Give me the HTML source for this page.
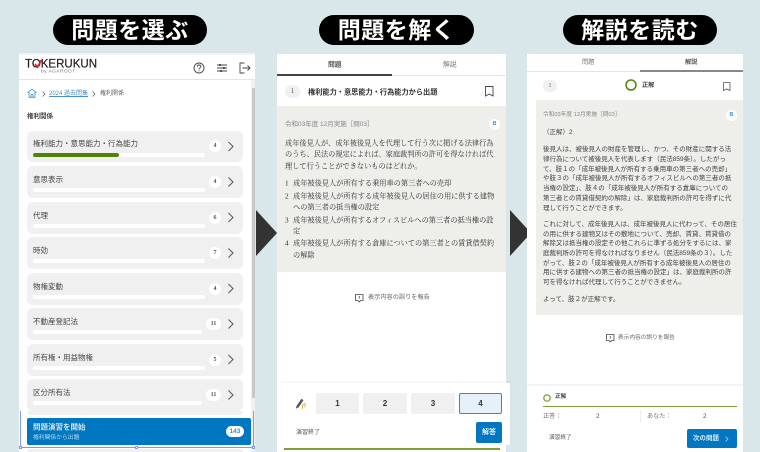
<!DOCTYPE html>
<html lang="ja"><head><meta charset="utf-8">
<style>
*{box-sizing:border-box}
html,body{margin:0;padding:0}
html{background:#d9e6ea}
body{width:760px;height:452px;overflow:hidden;background:#d9e6ea;position:relative;font-family:"Liberation Sans","Noto Sans CJK JP",sans-serif;color:#444;filter:blur(.3px)}
.a{position:absolute;white-space:nowrap}
.t{position:absolute;white-space:nowrap;line-height:1;transform:translateY(-50%)}
.pill{position:absolute;top:15px;height:30px;background:#000;border-radius:15px;color:#fff;font-size:23px;font-weight:700;text-align:center;line-height:30px;letter-spacing:.5px}
.item{position:absolute;left:27px;width:216px;height:32px;background:#f0f0f0;border-radius:6px}
.item .l{position:absolute;left:6px;top:9.500px;font-size:7.500px;line-height:1;color:#444;white-space:nowrap}
.item .b{position:absolute;left:6px;top:21.500px;height:4px;border-radius:2px;background:#fff}
.item .c{position:absolute;top:10px;height:12px;border-radius:6px;background:#fff;font:700 6px/12px "Liberation Serif",serif;text-align:center;color:#555}
.p{font-family:"Liberation Serif","Noto Serif CJK SC",serif;font-size:7.200px;color:#2e2e2e}
.e{font-size:6.500px;color:#444}
.opt{position:absolute;top:393px;height:21px;background:#f0f0f0;border-radius:2px;font:700 8px/21px "Liberation Sans",sans-serif;text-align:center;color:#333}
.badge{position:absolute;width:11px;height:11px;border-radius:50%;background:#fff;color:#3a94dc;font:700 5.500px/11px "Liberation Sans",sans-serif;text-align:center}
.h{position:absolute;width:3px;height:3px;background:#fff;border:1px solid #7c9bea}
svg{position:absolute;overflow:visible}
</style></head><body>

<div class="pill" style="left:53px;width:154px">問題を選ぶ</div>
<div class="pill" style="left:319px;width:155px">問題を解く</div>
<div class="pill" style="left:563px;width:154px">解説を読む</div>

<svg style="left:256px;top:210px" width="21" height="46"><path d="M0 0L21 23L0 46Z" fill="#333"/></svg>
<svg style="left:510px;top:210px" width="21" height="46"><path d="M0 0L21 23L0 46Z" fill="#333"/></svg>

<!-- panel 1 -->
<div class="a" style="left:19px;top:53px;width:236px;height:399px;background:#fff"></div>
<div class="a" style="left:19px;top:53px;width:236px;height:2px;background:#f0f5f6"></div>
<div class="a" style="left:19px;top:79px;width:236px;height:1px;background:#e4e4e4"></div>
<div class="t" style="left:25px;top:64.500px;font-size:11.500px;letter-spacing:0;color:#222;-webkit-text-stroke:.2px #222">TOKERUKUN</div>
<svg style="left:34px;top:59px" width="9" height="10"><path d="M1 5L3.500 8L7.500 1" fill="none" stroke="#d8232a" stroke-width="1.700"/></svg>
<div class="t" style="left:41px;top:73px;font-size:4.800px;letter-spacing:.45px;color:#777">by AGAROOT</div>
<svg style="left:193px;top:62px" width="12" height="12" viewBox="0 0 12 12"><circle cx="6" cy="6" r="5" fill="none" stroke="#444" stroke-width=".9"/><path d="M4.300 4.800C4.300 3.600 5 3 6 3S7.800 3.600 7.800 4.600C7.800 5.800 6 5.900 6 7.400M6 8.400V9.200" fill="none" stroke="#444" stroke-width=".9"/></svg>
<svg style="left:217px;top:63px" width="11" height="10" viewBox="0 0 11 10"><path d="M0 2H10M0 5H10M0 8H10" stroke="#444" stroke-width="1"/><path d="M3 1V3M7 4V6M4 7V9" stroke="#222" stroke-width="1.200"/></svg>
<svg style="left:239px;top:62px" width="12" height="12" viewBox="0 0 12 12"><path d="M5.500 1H1V11H5.500" fill="none" stroke="#444" stroke-width=".9"/><path d="M3.500 6H11M8.500 3.500L11 6L8.500 8.500" fill="none" stroke="#444" stroke-width=".9"/></svg>
<svg style="left:27px;top:88px" width="10" height="10" viewBox="0 0 10 10"><path d="M.5 5L5 1L9.500 5M2 4V9.300H8V4M4 9.300V6.500H6V9.300" fill="none" stroke="#3a8fd0" stroke-width=".8"/></svg>
<svg style="left:42px;top:91px" width="4" height="6"><path d="M.5.500L3 3L.5 5.500" fill="none" stroke="#555" stroke-width=".7"/></svg>
<div class="t" style="left:49px;top:94px;font-size:6px;color:#4a90c8;text-decoration:underline">2024 過去問集</div>
<svg style="left:92px;top:91px" width="4" height="6"><path d="M.5.500L3 3L.5 5.500" fill="none" stroke="#555" stroke-width=".7"/></svg>
<div class="t" style="left:100px;top:94px;font-size:6px;color:#666">権利関係</div>
<div class="t" style="left:27px;top:117px;font-size:6.500px;font-weight:700;color:#444">権利関係</div>

<div class="a" style="left:251px;top:80px;width:4px;height:372px;background:#f0f0f0"></div>
<div class="a" style="left:252px;top:88px;width:3px;height:310px;background:#c8c8c8"></div>

<div class="item" style="top:131px;height:31px"><div class="l" style="top:9.250px">権利能力・意思能力・行為能力</div><div class="b" style="width:172px"></div><div class="b" style="width:86px;background:#4f8506"></div><div class="c" style="left:182px;width:12px;top:9px">4</div></div>
<div class="item" style="top:166px"><div class="l">意思表示</div><div class="b" style="width:172px"></div><div class="c" style="left:182px;width:12px">4</div></div>
<div class="item" style="top:202px"><div class="l">代理</div><div class="b" style="width:172px"></div><div class="c" style="left:182px;width:12px">6</div></div>
<div class="item" style="top:237px"><div class="l">時効</div><div class="b" style="width:172px"></div><div class="c" style="left:182px;width:12px">7</div></div>
<div class="item" style="top:273px"><div class="l">物権変動</div><div class="b" style="width:172px"></div><div class="c" style="left:182px;width:12px">4</div></div>
<div class="item" style="top:308px"><div class="l">不動産登記法</div><div class="b" style="width:169px"></div><div class="c" style="left:179px;width:15px">11</div></div>
<div class="item" style="top:344px"><div class="l">所有権・用益物権</div><div class="b" style="width:172px"></div><div class="c" style="left:182px;width:12px">5</div></div>
<div class="item" style="top:379px"><div class="l">区分所有法</div><div class="b" style="width:169px"></div><div class="c" style="left:179px;width:15px">11</div></div>
<div class="a" style="left:27px;top:411px;width:216px;height:4px;background:#f0f0f0;border-radius:0 0 4px 4px"></div>
<div class="a" style="left:27px;top:449px;width:216px;height:3px;background:#f0f0f0;border-radius:4px 4px 0 0"></div>

<svg style="left:228px;top:0" width="8" height="452"><g fill="none" stroke="#555" stroke-width="1">
<path d="M.5 142L5 146.500L.5 151"/><path d="M.5 177.500L5 182L.5 186.500"/><path d="M.5 213L5 217.500L.5 222"/><path d="M.5 248.500L5 253L.5 257.500"/><path d="M.5 284L5 288.500L.5 293"/><path d="M.5 319.500L5 324L.5 328.500"/><path d="M.5 355L5 359.500L.5 364"/><path d="M.5 390.500L5 395L.5 399.500"/></g></svg>

<div class="a" style="left:20px;top:411px;width:234px;height:37px;border:1px solid #7c9bea;border-top:0"></div>
<div class="h" style="left:19px;top:446px"></div>
<div class="h" style="left:135px;top:446px"></div>
<div class="h" style="left:252px;top:446px"></div>
<div class="a" style="left:27px;top:418px;width:224px;height:27px;background:#0077c0;border-radius:2px"></div>
<div class="t" style="left:33px;top:426.500px;font-size:7.500px;font-weight:700;color:#cfe4f3">問題演習を開始</div>
<div class="t" style="left:33px;top:438.500px;font-size:5.800px;color:#b5d6ec">権利関係から出題</div>
<div class="a" style="left:226px;top:426px;width:18px;height:11px;border-radius:6px;background:#fff;color:#3a8ec8;font:700 6.500px/11px 'Liberation Sans',sans-serif;text-align:center">143</div>

<!-- panel 2 -->
<div class="a" style="left:277px;top:54px;width:229px;height:398px;background:#fff"></div>
<div class="t" style="left:328px;top:65.500px;font-size:6.800px;font-weight:700;color:#555">問題</div>
<div class="t" style="left:443px;top:65.500px;font-size:6.800px;color:#777">解説</div>
<div class="a" style="left:277px;top:75px;width:229px;height:1px;background:#e4e4e4"></div>
<div class="a" style="left:277px;top:74px;width:115px;height:1.500px;background:#444"></div>
<div class="a" style="left:285px;top:85px;width:15px;height:13px;border-radius:7px;background:#f0f0f0;color:#555;font:7px/13px 'Liberation Serif',serif;text-align:center">1</div>
<div class="t" style="left:308px;top:91.500px;font-size:7.200px;font-weight:700;color:#333">権利能力・意思能力・行為能力から出題</div>
<svg style="left:485px;top:86px" width="9" height="11"><path d="M.5.500H8V10L4.250 8L.5 10Z" fill="none" stroke="#444" stroke-width=".9"/></svg>
<div class="a" style="left:277px;top:106px;width:229px;height:166px;background:#eeeeea"></div>
<div class="t" style="left:285px;top:125px;font-size:6.500px;color:#888">令和03年度 12月実施［問03］</div>
<div class="badge" style="left:489px;top:119px">B</div>
<div class="t p" style="left:285px;top:143.500px">成年後見人が、成年被後見人を代理して行う次に掲げる法律行為</div>
<div class="t p" style="left:285px;top:155px">のうち、民法の規定によれば、家庭裁判所の許可を得なければ代</div>
<div class="t p" style="left:285px;top:166.500px">理して行うことができないものはどれか。</div>
<div class="t p" style="left:285px;top:184px">1</div><div class="t p" style="left:293px;top:184px">成年被後見人が所有する乗用車の第三者への売却</div>
<div class="t p" style="left:285px;top:197px">2</div><div class="t p" style="left:293px;top:197px">成年被後見人が所有する成年被後見人の居住の用に供する建物</div>
<div class="t p" style="left:293px;top:208px">への第三者の抵当権の設定</div>
<div class="t p" style="left:285px;top:221px">3</div><div class="t p" style="left:293px;top:221px">成年被後見人が所有するオフィスビルへの第三者の抵当権の設</div>
<div class="t p" style="left:293px;top:232px">定</div>
<div class="t p" style="left:285px;top:244px">4</div><div class="t p" style="left:293px;top:244px">成年被後見人が所有する倉庫についての第三者との賃貸借契約</div>
<div class="t p" style="left:293px;top:256px">の解除</div>
<svg style="left:355px;top:294px" width="9" height="9"><path d="M.5.500H8V6.500H5.500L4.250 8L3 6.500H.5Z" fill="none" stroke="#444" stroke-width=".8"/><path d="M4.250 2V4.500" stroke="#444" stroke-width=".8"/></svg>
<div class="t" style="left:368px;top:298px;font-size:6.200px;color:#666">表示内容の誤りを報告</div>

<div class="a" style="left:281px;top:383px;width:229px;height:62px;background:#fff;box-shadow:0 -1px 2px rgba(0,0,0,.05)"></div>
<svg style="left:295px;top:398px" width="11" height="12" viewBox="0 0 11 12"><path d="M1.500 8L6.500.8L8.500 2.300L3.500 9.500L1 10.500Z" fill="#555"/><path d="M7.500 11V7L10 5.500V9.500" fill="none" stroke="#e8b24a" stroke-width="1"/></svg>
<div class="opt" style="left:316px;width:43px">1</div>
<div class="opt" style="left:363px;width:44px">2</div>
<div class="opt" style="left:411px;width:44px">3</div>
<div class="opt" style="left:459px;width:43px;background:#e6f0f9;border:1px solid #2f8ccb;line-height:19px">4</div>
<div class="t" style="left:296px;top:433px;font-size:6px;color:#555">演習終了</div>
<div class="a" style="left:476px;top:422px;width:26px;height:21px;background:#0077c0;border-radius:2px;color:#e6f2fa;font:700 7px/21px 'Liberation Sans','Noto Sans CJK JP',sans-serif;text-align:center">解答</div>
<div class="a" style="left:284px;top:448px;width:216px;height:1.500px;background:#7ba23a"></div>

<!-- panel 3 -->
<div class="a" style="left:527px;top:54px;width:216px;height:398px;background:#fff"></div>
<div class="t" style="left:582px;top:62.500px;font-size:6.200px;color:#777">問題</div>
<div class="t" style="left:685px;top:62.500px;font-size:6.200px;font-weight:700;color:#555">解説</div>
<div class="a" style="left:527px;top:71px;width:216px;height:1px;background:#e4e4e4"></div>
<div class="a" style="left:640px;top:70px;width:103px;height:1.500px;background:#888"></div>
<div class="a" style="left:543px;top:80px;width:14px;height:12px;border-radius:6px;background:#f0f0f0;color:#666;font:6.500px/12px 'Liberation Serif',serif;text-align:center">1</div>
<svg style="left:625px;top:79px" width="13" height="13"><circle cx="6" cy="6" r="5" fill="none" stroke="#4f8506" stroke-width="1.500"/></svg>
<div class="t" style="left:642px;top:85.500px;font-size:6.200px;font-weight:700;color:#444">正解</div>
<svg style="left:723px;top:82px" width="8" height="9"><path d="M.5.500H7V8.500L3.750 7L.5 8.500Z" fill="none" stroke="#555" stroke-width=".8"/></svg>
<div class="a" style="left:536px;top:100px;width:207px;height:215px;background:#eeeeea"></div>
<div class="t" style="left:543px;top:116px;font-size:5.700px;color:#888">令和03年度 12月実施［問03］</div>
<div class="badge" style="left:726px;top:110px">B</div>
<div class="t e" style="left:543px;top:133px">（正解）2</div>
<div class="t e" style="left:543px;top:150px">後見人は、被後見人の財産を管理し、かつ、その財産に関する法</div>
<div class="t e" style="left:543px;top:159.700px">律行為について被後見人を代表します（民法859条）。したがっ</div>
<div class="t e" style="left:543px;top:169.500px">て、肢１の「成年被後見人が所有する乗用車の第三者への売却」</div>
<div class="t e" style="left:543px;top:179.200px">や肢３の「成年被後見人が所有するオフィスビルへの第三者の抵</div>
<div class="t e" style="left:543px;top:189px">当権の設定」、肢４の「成年被後見人が所有する倉庫についての</div>
<div class="t e" style="left:543px;top:198.700px">第三者との賃貸借契約の解除」は、家庭裁判所の許可を得ずに代</div>
<div class="t e" style="left:543px;top:209px">理して行うことができます。</div>
<div class="t e" style="left:543px;top:225px">これに対して、成年後見人は、成年被後見人に代わって、その居住</div>
<div class="t e" style="left:543px;top:234.700px">の用に供する建物又はその敷地について、売却、賃貸、賃貸借の</div>
<div class="t e" style="left:543px;top:244.400px">解除又は抵当権の設定その他これらに準ずる処分をするには、家</div>
<div class="t e" style="left:543px;top:254px">庭裁判所の許可を得なければなりません（民法859条の３）。した</div>
<div class="t e" style="left:543px;top:263.700px">がって、肢２の「成年被後見人が所有する成年被後見人の居住の</div>
<div class="t e" style="left:543px;top:273.400px">用に供する建物への第三者の抵当権の設定」は、家庭裁判所の許</div>
<div class="t e" style="left:543px;top:283px">可を得なければ代理して行うことができません。</div>
<div class="t e" style="left:543px;top:300px">よって、肢２が正解です。</div>
<svg style="left:606px;top:334px" width="9" height="9"><path d="M.5.500H8V6.500H5.500L4.250 8L3 6.500H.5Z" fill="none" stroke="#444" stroke-width=".8"/><path d="M4.250 2V4.500" stroke="#444" stroke-width=".8"/></svg>
<div class="t" style="left:618px;top:338.500px;font-size:5.700px;color:#666">表示内容の誤りを報告</div>
<div class="a" style="left:527px;top:384px;width:216px;height:2px;background:#f4f4f4"></div>
<svg style="left:543px;top:394px" width="8" height="8"><circle cx="4" cy="4" r="3.200" fill="none" stroke="#6d9a1f" stroke-width="1.200"/></svg>
<div class="t" style="left:555px;top:398px;font-size:5.700px;font-weight:700;color:#444">正解</div>
<div class="a" style="left:543px;top:406px;width:194px;height:1px;background:#7ba23a"></div>
<div class="t" style="left:543px;top:417px;font-size:6.200px;color:#777">正答：</div>
<div class="t" style="left:596px;top:417px;font-size:6.500px;color:#555">2</div>
<div class="a" style="left:640px;top:410px;width:1px;height:13px;background:#eee"></div>
<div class="t" style="left:647px;top:417px;font-size:6.200px;color:#777">あなた：</div>
<div class="t" style="left:703px;top:417px;font-size:6.500px;color:#555">2</div>
<div class="t" style="left:549px;top:439px;font-size:5.700px;color:#555">演習終了</div>
<div class="a" style="left:687px;top:429px;width:50px;height:19px;background:#0077c0;border-radius:2px"></div>
<div class="t" style="left:693px;top:439px;font-size:6.500px;font-weight:700;color:#d9ebf6">次の問題</div>
<svg style="left:725px;top:436px" width="4" height="6"><path d="M.5.500L3 3L.5 5.500" fill="none" stroke="#bcdcf0" stroke-width=".7"/></svg>

</body></html>
